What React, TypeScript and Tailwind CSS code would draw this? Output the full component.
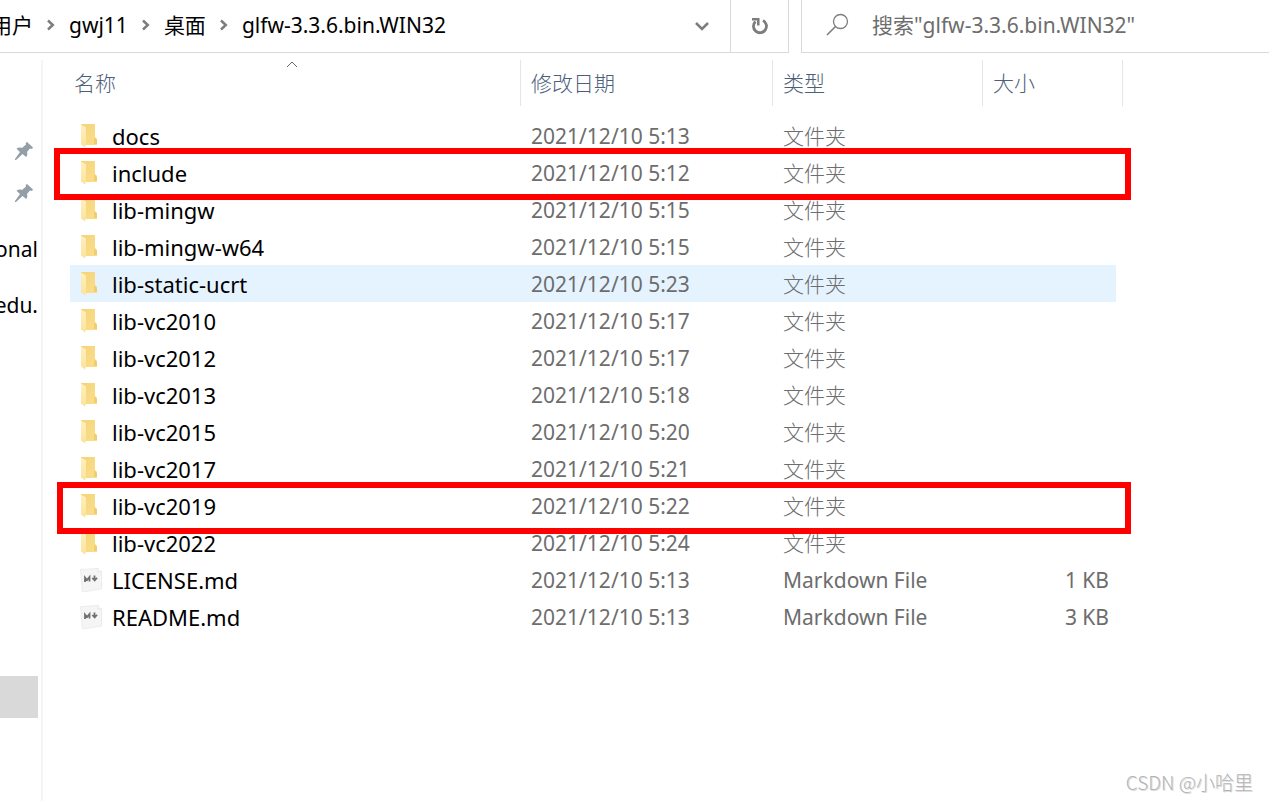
import React from 'react';

const crumbs = ['用户', 'gwj11', '桌面', 'glfw-3.3.6.bin.WIN32'];

const files = [
  { name: 'docs', date: '2021/12/10 5:13' },
  { name: 'include', date: '2021/12/10 5:12' },
  { name: 'lib-mingw', date: '2021/12/10 5:15' },
  { name: 'lib-mingw-w64', date: '2021/12/10 5:15' },
  { name: 'lib-static-ucrt', date: '2021/12/10 5:23', hovered: true },
  { name: 'lib-vc2010', date: '2021/12/10 5:17' },
  { name: 'lib-vc2012', date: '2021/12/10 5:17' },
  { name: 'lib-vc2013', date: '2021/12/10 5:18' },
  { name: 'lib-vc2015', date: '2021/12/10 5:20' },
  { name: 'lib-vc2017', date: '2021/12/10 5:21' },
  { name: 'lib-vc2019', date: '2021/12/10 5:22' },
  { name: 'lib-vc2022', date: '2021/12/10 5:24' },
  { name: 'LICENSE.md', date: '2021/12/10 5:13', size: '1 KB' },
  { name: 'README.md', date: '2021/12/10 5:13', size: '3 KB' },
];

const FolderIcon = () => (
  <svg className="w-6 h-6 shrink-0" viewBox="0 0 24 24" aria-hidden="true">
    <defs>
      <linearGradient id="folder-back" x1="0" y1="0" x2="1" y2="1">
        <stop offset="0" stopColor="#f4d47a" />
        <stop offset="1" stopColor="#fbdf8c" />
      </linearGradient>
      <linearGradient id="folder-front" x1="0" y1="0" x2="0" y2="1">
        <stop offset="0" stopColor="#fff0bd" />
        <stop offset="1" stopColor="#fbe39c" />
      </linearGradient>
    </defs>
    <path d="M1 0h14v13l2 2v6H4L1 19z" fill="url(#folder-back)" />
    <path d="M15 13.500l2 2V20h-3v-5z" fill="#f2cd70" />
    <path d="M1 0.500l5 3v17l-1 3-4-3z" fill="url(#folder-front)" />
  </svg>
);

const MarkdownIcon = () => (
  <svg className="w-6 h-6 shrink-0" viewBox="0 0 24 24" aria-hidden="true">
    <path d="M0.500 1.500L18 0.500l3.500 3V21L2.500 24z" fill="#f5f5f5" stroke="#ececec" />
    <path d="M18 0.500v3.500l3.500-.5" fill="#fff" stroke="#e6e6e6" />
    <path d="M5 14V9.500l2 2.500 2.500-3V13.500" fill="none" stroke="#707070" strokeWidth="1.800" />
    <path d="M14.500 7.500v4.500M12.300 10l2.400 2.500 2.300-2.800" fill="none" stroke="#707070" strokeWidth="1.800" />
  </svg>
);

const PinIcon = () => (
  <svg className="w-5 h-5" viewBox="0 0 20 20" aria-hidden="true">
    <path d="M13 1l6 5.500-1 1.500-2-.5-3 3.500c.7 2 .3 3.700-.8 5L8.500 13 2 19H1v-1l5-7-3.500-3.200C4 6.500 6 6.300 8 7l4-3.500-.3-1.500z" fill="#949ea7" />
  </svg>
);

const Chevron = () => (
  <svg className="w-2 h-3 shrink-0" viewBox="0 0 8 12" aria-hidden="true">
    <path d="M1 1.500L5.800 6 1 10.500" fill="none" stroke="#7d7d7d" strokeWidth="2.500" />
  </svg>
);

const AddressBar = () => (
  <header className="flex h-[53px] gap-3">
    <nav className="flex flex-1 min-w-0 border-b border-r border-[#d9d9d9]" aria-label="路径">
      <ol className="flex flex-1 items-center -ml-[9px] pb-[2px] whitespace-nowrap">
        {crumbs.map((crumb, index) => (
          <li key={crumb} className="flex items-center">
            {index > 0 && <span className="flex w-9 justify-center"><Chevron /></span>}
            <a href="#" className="text-black">{crumb}</a>
          </li>
        ))}
      </ol>
      <button className="w-14 flex items-center justify-center" aria-label="历史记录">
        <svg className="w-4 h-4" viewBox="0 0 16 16">
          <path d="M2 5l6 6 6-6" fill="none" stroke="#7d7d7d" strokeWidth="2.500" />
        </svg>
      </button>
      <button className="w-[58px] border-l border-[#d9d9d9] flex items-center justify-center" aria-label="刷新">
        <svg className="w-[18px] h-[18px]" viewBox="0 0 18 18">
          <path d="M12 3.500A6.500 6.500 0 1 1 4.500 4.500" fill="none" stroke="#7d7d7d" strokeWidth="2.800" />
          <path d="M1 2.200H7.300V8.500" fill="none" stroke="#7d7d7d" strokeWidth="2.500" />
        </svg>
      </button>
    </nav>
    <div className="flex w-[468px] items-center border-b border-l border-[#d9d9d9] pb-[2px] pl-6">
      <svg className="w-6 h-6 shrink-0" viewBox="0 0 24 24" aria-hidden="true">
        <circle cx="14.500" cy="8.500" r="7" fill="none" stroke="#7d7d7d" strokeWidth="1.300" />
        <path d="M9.500 13.500L1 22" stroke="#7d7d7d" strokeWidth="1.600" />
      </svg>
      <input
        type="text"
        aria-label="搜索"
        placeholder={'搜索"glfw-3.3.6.bin.WIN32"'}
        className="flex-1 min-w-0 ml-[22px] outline-none placeholder:text-[#6d6d6d]"
      />
    </div>
  </header>
);

const Sidebar = () => (
  <aside className="w-[43px] shrink-0 border-r-2 border-[#f5f5f5] pr-[3px] pt-[70px]">
    <div className="flex h-[42px] items-center justify-end pr-1"><PinIcon /></div>
    <div className="flex h-[42px] items-center justify-end pr-1"><PinIcon /></div>
    <a href="#" className="mt-[14px] flex h-[42px] items-center justify-end overflow-hidden">onal</a>
    <a href="#" className="mt-[14px] flex h-[42px] items-center justify-end overflow-hidden">edu.</a>
    <div className="mt-[350px] h-[42px] bg-[#d9d9d9]" />
  </aside>
);

const FileTable = () => (
  <table className="w-[1053px] table-fixed border-separate border-spacing-0 text-left">
    <colgroup>
      <col className="w-[451px]" />
      <col className="w-[252px]" />
      <col className="w-[210px]" />
      <col className="w-[133px]" />
      <col className="w-[7px]" />
    </colgroup>
    <thead>
      <tr className="h-[46px] text-[#4c607a]">
        <th className="relative border-r border-[#e5e5e5] pl-1 font-light" aria-sort="ascending">
          名称
          <svg className="absolute left-[216px] top-0 w-3 h-2" viewBox="0 0 12 8" aria-hidden="true">
            <path d="M1 7l5-5 5 5" fill="none" stroke="#666" />
          </svg>
        </th>
        <th className="border-r border-[#e5e5e5] pl-[10px] font-light">修改日期</th>
        <th className="border-r border-[#e5e5e5] pl-[10px] font-light">类型</th>
        <th colSpan={2} className="border-r border-[#e5e5e5] pl-[10px] font-light">大小</th>
      </tr>
    </thead>
    <tbody className="text-[#6d6d6d]">
      <tr className="h-[11px]"><td colSpan={5} /></tr>
      {files.map((file) => (
        <tr key={file.name} className="h-[37px]">
          <td className={file.hovered ? 'bg-[#e5f3ff]' : ''}>
            <div className="flex items-center gap-2 pl-[10px] text-[22px] text-black">
              {file.size ? <MarkdownIcon /> : <FolderIcon />}
              {file.name}
            </div>
          </td>
          <td className={file.hovered ? 'bg-[#e5f3ff] pl-[10px]' : 'pl-[10px]'}>{file.date}</td>
          <td className={file.hovered ? 'bg-[#e5f3ff] pl-[10px]' : 'pl-[10px]'}>
            {file.size ? 'Markdown File' : <span className="font-light">文件夹</span>}
          </td>
          <td className={file.hovered ? 'bg-[#e5f3ff] pr-[7px] text-right' : 'pr-[7px] text-right'}>{file.size}</td>
          <td />
        </tr>
      ))}
    </tbody>
  </table>
);

const App = () => {
  return (
    <div className="relative flex min-h-screen flex-col overflow-hidden bg-white font-['Noto_Sans','Noto_Sans_CJK_SC',sans-serif] text-[21px] leading-[30px] text-black">
      <AddressBar />
      <div className="mt-[7px] flex flex-1">
        <Sidebar />
        <main className="relative flex-1 pl-[27px]">
          <FileTable />
          {/* red marker frames around include and lib-vc2019 */}
          <div className="absolute left-[11px] top-[88px] h-[52px] w-[1077px] border-6 border-[#ff0000]" />
          <div className="absolute left-[14px] top-[422px] h-[52px] w-[1074px] border-6 border-[#ff0000]" />
        </main>
      </div>
      <div className="absolute bottom-1 right-4 font-['Noto_Sans_CJK_SC',sans-serif] text-[19px] font-light text-[#b4b4b4] [text-shadow:1px_1px_0_#8f8f8f55]">
        CSDN @小哈里
      </div>
    </div>
  );
};

export default App;
